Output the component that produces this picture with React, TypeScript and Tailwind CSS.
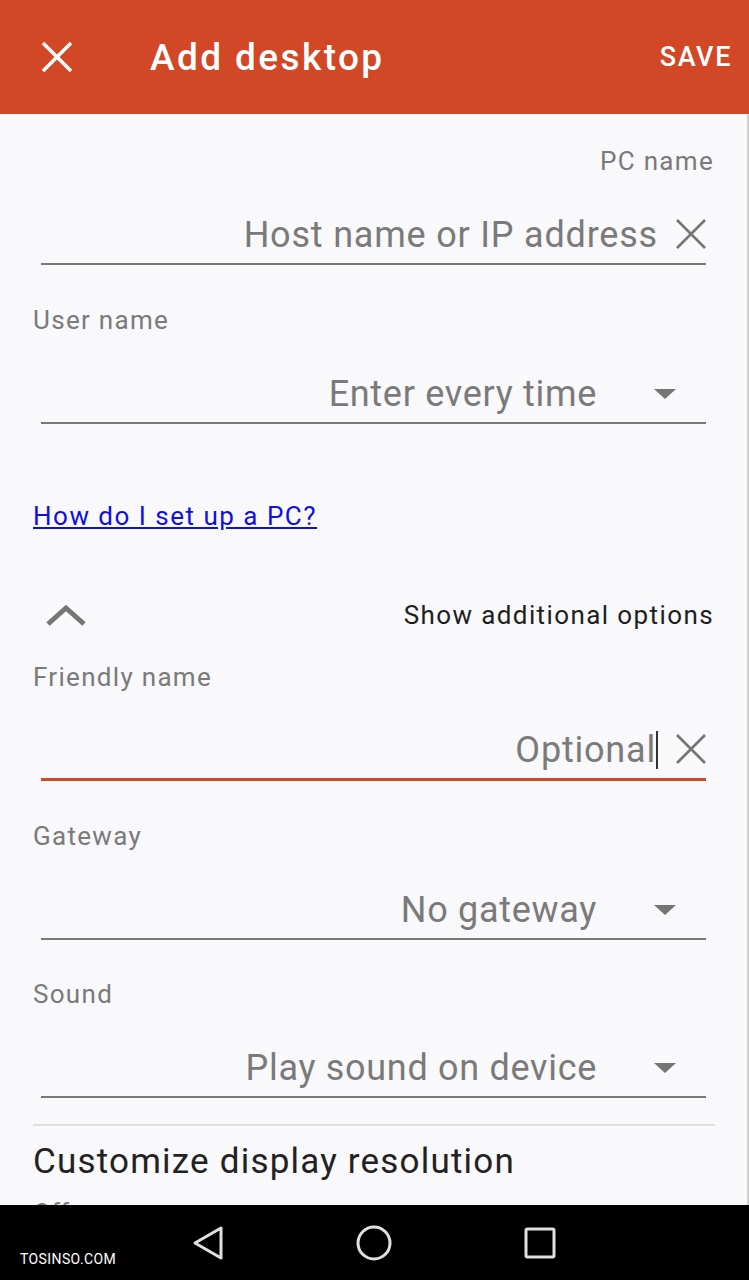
import React from 'react';

const font = { fontFamily: 'Roboto, "Noto Sans", sans-serif' };

const ClearIcon = () => (
  <svg width="30" height="30" viewBox="0 0 30 30" className="shrink-0">
    <path d="M1 1 L29 29 M29 1 L1 29" stroke="#757575" strokeWidth="2.6" fill="none" />
  </svg>
);

const DropIcon = () => (
  <svg width="22" height="12" viewBox="0 0 22 12" className="shrink-0">
    <path d="M0 1 L22 1 L11 11 Z" fill="#757575" />
  </svg>
);

const Label: React.FC<{ text: string; right?: boolean; className?: string }> = ({ text, right, className }) => (
  <div
    className={`h-[36px] flex items-center text-[26px] tracking-[1.3px] text-[#7a7a7a] ${
      right ? 'justify-end pr-[33px]' : 'pl-[33px]'
    } ${className || ''}`}
  >
    {text}
  </div>
);

const TextRow: React.FC<{ value: string; focused?: boolean }> = ({ value, focused }) => (
  <div
    className={`ml-[41px] mr-[41px] h-[86px] flex items-end justify-end pb-[8px] ${
      focused ? 'border-b-[3px] border-[#d24a2a]' : 'border-b-2 border-[#777]'
    }`}
  >
    <span className="text-[36px] tracking-[0.8px] leading-[40px] text-[#7a7a7a]">{value}</span>
    {focused && <span className="w-[2px] h-[38px] bg-[#333] mb-[1px]" />}
    <span className="ml-[18px] mb-[6px]">
      <ClearIcon />
    </span>
  </div>
);

const SelectRow: React.FC<{ value: string }> = ({ value }) => (
  <div className="ml-[41px] mr-[41px] h-[86px] flex items-end justify-end pb-[8px] border-b-2 border-[#777]">
    <span className="text-[36px] tracking-[0.7px] leading-[40px] text-[#7a7a7a]">{value}</span>
    <span className="ml-[57px] mr-[30px] mb-[14px]">
      <DropIcon />
    </span>
  </div>
);

export default function App() {
  return (
    <div style={font} className="w-[749px] h-[1280px] flex flex-col bg-[#f9f8fb] overflow-hidden">
      <div className="h-[114px] shrink-0 bg-[#d24726] flex items-center text-white">
        <svg width="32" height="32" viewBox="0 0 32 32" className="ml-[41px]">
          <path d="M2 2 L30 30 M30 2 L2 30" stroke="#fff" strokeWidth="3.6" fill="none" />
        </svg>
        <div className="ml-[77px] text-[37px] font-medium tracking-[2.4px] leading-none">Add desktop</div>
        <div className="ml-auto mr-[17px] text-[27px] font-medium tracking-[1.6px]">SAVE</div>
      </div>

      <div className="flex-1 overflow-hidden border-r-2 border-[#d0d0d0]">
        <Label text="PC name" right className="mt-[29px]" />
        <TextRow value="Host name or IP address" />

        <Label text="User name" className="mt-[37px]" />
        <SelectRow value="Enter every time" />

        <div className="mt-[74px] h-[36px] pl-[33px] flex items-center">
          <a href="#" className="text-[26px] tracking-[1.5px] text-[#1010dd] underline">How do I set up a PC?</a>
        </div>

        <div className="mt-[63px] h-[36px] flex items-center justify-between pl-[45px] pr-[33px]">
          <svg width="42" height="22" viewBox="0 0 42 22">
            <path d="M3 20 L21 4 L39 20" stroke="#757575" strokeWidth="5" fill="none" />
          </svg>
          <span className="text-[26px] tracking-[1.4px] text-[#1e1e1e]">Show additional options</span>
        </div>

        <Label text="Friendly name" className="mt-[26px]" />
        <TextRow value="Optional" focused />

        <Label text="Gateway" className="mt-[37px]" />
        <SelectRow value="No gateway" />

        <Label text="Sound" className="mt-[36px]" />
        <SelectRow value="Play sound on device" />

        <div className="mt-[26px] ml-[33px] mr-[32px] h-[2px] bg-[#e0e0e0]" />
        <div className="mt-[16px] pl-[33px] h-[40px] flex items-center text-[35px] tracking-[1.2px] text-[#222]">
          Customize display resolution
        </div>
        <div className="mt-[13px] pl-[33px] h-[36px] flex items-center text-[26px] text-[#7a7a7a]">Off</div>
      </div>

      <div className="h-[75px] shrink-0 bg-black flex items-center relative">
        <span className="absolute left-[20px] top-[44px] text-[14px] tracking-[0.4px] text-white">TOSINSO.COM</span>
        <svg width="32" height="36" viewBox="0 0 32 36" className="ml-[192px]">
          <path d="M29 3 L3 18 L29 33 Z" stroke="#e0e0e0" strokeWidth="3" fill="none" strokeLinejoin="round" />
        </svg>
        <svg width="36" height="36" viewBox="0 0 36 36" className="ml-[132px]">
          <circle cx="18" cy="18" r="16" stroke="#e0e0e0" strokeWidth="3" fill="none" />
        </svg>
        <svg width="32" height="32" viewBox="0 0 32 32" className="ml-[132px]">
          <rect x="2" y="2" width="28" height="28" rx="1.5" stroke="#e0e0e0" strokeWidth="3" fill="none" />
        </svg>
      </div>
    </div>
  );
}
